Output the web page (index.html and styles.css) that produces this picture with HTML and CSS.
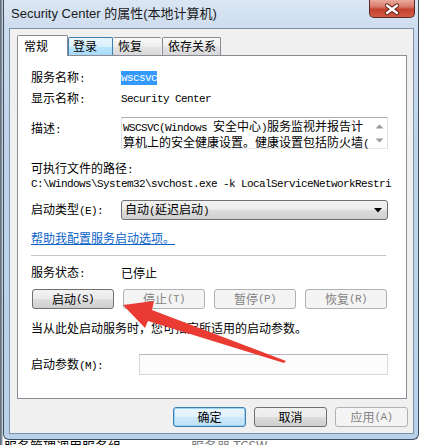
FILE: index.html
```html
<!DOCTYPE html>
<html lang="zh-CN">
<head>
<meta charset="utf-8">
<title>Security Center 的属性(本地计算机)</title>
<link rel="stylesheet" href="styles.css">
</head>
<body>
<div class="desk">
  <div class="window">
    <div class="titlebar">
      <span class="title">Security Center 的属性(本地计算机)</span>
      <div class="close">
        <svg width="44" height="16" viewBox="0 0 44 16">
          <path d="M17 4.5 L27 12 M27 4.5 L17 12" stroke="#5a1a12" stroke-width="4.2" stroke-linecap="round" fill="none"/>
          <path d="M17 4.5 L27 12 M27 4.5 L17 12" stroke="#ffffff" stroke-width="2.4" stroke-linecap="round" fill="none"/>
        </svg>
      </div>
    </div>
    <div class="client">
      <div class="tabs">
        <div class="tab active">常规</div>
        <div class="tab hover">登录</div>
        <div class="tab">恢复</div>
        <div class="tab t4">依存关系</div>
      </div>
      <div class="panel">
        <div class="row r1"><span class="lab">服务名称<span class="m">:</span></span><span class="m"><span class="hl">wscsvc</span></span></div>
        <div class="row r2"><span class="lab">显示名称<span class="m">:</span></span><span class="m">Security Center</span></div>
        <div class="row r3">
          <span class="lab top">描述<span class="m">:</span></span>
          <div class="desc">
            <div class="desc-text">
              <div class="line"><span class="m">WSCSVC(Windows </span>安全中心<span class="m">)</span>服务监视并报告计</div>
              <div class="line">算机上的安全健康设置。健康设置包括防火墙<span class="m">(</span></div>
            </div>
            <div class="vscroll">
              <svg width="9" height="5" viewBox="0 0 9 5"><path d="M0.5 4.5 L4.5 0.5 L8.5 4.5 Z" fill="#9a9a9a"/></svg>
              <svg width="9" height="5" viewBox="0 0 9 5"><path d="M0.5 0.5 L4.5 4.5 L8.5 0.5 Z" fill="#9a9a9a"/></svg>
            </div>
          </div>
        </div>
        <div class="plain r4">可执行文件的路径<span class="m">:</span></div>
        <div class="path">C:\Windows\System32\svchost.exe -k LocalServiceNetworkRestri</div>
        <div class="row r6">
          <span class="lab">启动类型<span class="m">(E):</span></span>
          <div class="combo">
            <span>自动<span class="m">(</span>延迟启动<span class="m">)</span></span>
            <svg width="8" height="5" viewBox="0 0 8 5"><path d="M0 0 L8 0 L4 4.5 Z" fill="#000"/></svg>
          </div>
        </div>
        <a class="link" href="#">帮助我配置服务启动选项。</a>
        <div class="sep"></div>
        <div class="row r8"><span class="lab">服务状态<span class="m">:</span></span><span>已停止</span></div>
        <div class="btnrow">
          <div class="btn">启动<span class="m">(S)</span></div>
          <div class="btn disabled">停止<span class="m">(T)</span></div>
          <div class="btn disabled">暂停<span class="m">(P)</span></div>
          <div class="btn disabled">恢复<span class="m">(R)</span></div>
        </div>
        <div class="plain r10">当从此处启动服务时，您可指定所适用的启动参数。</div>
        <div class="row r11">
          <span class="lab wide">启动参数<span class="m">(M):</span></span>
          <div class="input"></div>
        </div>
      </div>
      <div class="footer">
        <div class="btn big default">确定</div>
        <div class="btn big">取消</div>
        <div class="btn big disabled">应用<span class="m">(A)</span></div>
      </div>
    </div>
  </div>
  <div class="under"><span class="u1">服务管理调用服务组</span><span class="u2">服务器 TCSW</span></div>
  <svg class="arrow" width="425" height="445" viewBox="0 0 425 445">
    <polygon points="123,305 154,301 152,310 286,361 284,363 148,321 145,328" fill="#ea3b33"/>
  </svg>
</div>
</body>
</html>
```
FILE: styles.css
```css
* { box-sizing: border-box; }

body {
  margin: 0;
  font-family: "Noto Sans CJK SC", "Liberation Sans", sans-serif;
  font-size: 12px;
  color: #000;
}

.desk {
  position: relative;
  width: 425px;
  height: 445px;
  overflow: hidden;
  background: linear-gradient(90deg, #5a6572 0, #8e9aa8 2px, #ffffff 3px);
}

.window {
  margin-left: 3px;
  width: 416px;
  height: 440px;
  border: 1px solid #3e4f63;
  border-top: 0;
  border-radius: 0 0 6px 6px;
  background: linear-gradient(180deg, #dae6f3 0, #cddcee 28px, #c0d5ec 120px, #b9d0ea 100%);
  padding: 0 4px 5px 5px;
  display: flex;
  flex-direction: column;
}

.titlebar {
  height: 28px;
  display: flex;
  align-items: flex-start;
  flex: none;
}

.title {
  padding: 6px 0 0 2px;
  font-family: "Liberation Sans", "Noto Sans CJK SC", sans-serif;
  font-size: 13px;
  line-height: 16px;
  color: #1a1a1a;
}

.close {
  margin-left: auto;
  margin-right: -1px;
  width: 46px;
  height: 18px;
  border: 1px solid #5b2a24;
  border-top: 0;
  border-radius: 0 0 5px 5px;
  background: linear-gradient(180deg, #e9a99c 0, #d97a69 40%, #c4412f 55%, #d35a45 100%);
  display: flex;
  align-items: center;
  justify-content: center;
}

.client {
  width: 405px;
  height: 406px;
  border: 1px solid #7d90a6;
  background: #f0f0f0;
  padding: 6px 0 0 7px;
  display: flex;
  flex-direction: column;
}

.tabs {
  display: flex;
  align-items: flex-end;
  height: 20px;
  flex: none;
}

.tab {
  height: 18px;
  width: 45px;
  border: 1px solid #898c95;
  border-bottom: 0;
  border-right: 0;
  border-radius: 2px 2px 0 0;
  background: linear-gradient(180deg, #fafafa 0, #ededed 50%, #e3e3e3 51%, #d9d9d9 100%);
  padding-left: 4px;
  line-height: 16px;
  font-size: 12px;
}

.tab:last-child { border-right: 1px solid #898c95; }

.tab.active {
  width: 51px;
  height: 21px;
  margin-bottom: -1px;
  background: #fff;
  border-right: 1px solid #898c95;
  padding-left: 6px;
  line-height: 19px;
  position: relative;
  z-index: 1;
}

.tab.hover {
  border-color: #3c7fb1;
  border-right: 1px solid #3c7fb1;
  background: linear-gradient(180deg, #eaf6fd 0, #d9f0fc 50%, #bee6fd 51%, #a7d9f5 100%);
  padding-left: 4px;
}

.tab:nth-child(3) { width: 48px; border-left: 0; padding-left: 5px; }
.tab.t4 { width: 59px; margin-left: 1px; padding-left: 5px; }

.panel {
  width: 390px;
  height: 344px;
  border: 1px solid #898c95;
  background: #fff;
  padding: 0 0 0 13px;
  flex: none;
}

.m {
  font-family: "Liberation Mono", monospace;
  font-size: 11px;
  letter-spacing: -0.6px;
}

.row {
  display: flex;
  align-items: center;
  line-height: 14px;
}

.lab {
  width: 90px;
  flex: none;
}

.lab.wide { width: 108px; }
.lab.top { align-self: flex-start; padding-top: 4px; }

.hl {
  background: #3399ff;
  color: #fff;
  padding: 1px 0;
}

.r1 { margin-top: 15px; height: 14px; }
.r2 { margin-top: 7px; height: 14px; }
.r3 { margin-top: 11px; }

.desc {
  width: 267px;
  height: 32px;
  border: 1px solid #dbdfe6;
  border-top-color: #abadb3;
  border-bottom-color: #e3e9ef;
  display: flex;
}

.desc-text {
  flex: 1;
  padding: 1px 0 0 1px;
}

.line {
  white-space: nowrap;
  line-height: 13px;
}

.vscroll {
  width: 16px;
  flex: none;
  display: flex;
  flex-direction: column;
  justify-content: space-between;
  align-items: center;
  padding: 6px 0 5px;
}

.plain { line-height: 14px; white-space: nowrap; }
.r4 { margin-top: 12px; }

.path {
  font-family: "Liberation Mono", monospace;
  font-size: 11px;
  letter-spacing: -0.6px;
  line-height: 14px;
  white-space: nowrap;
}

.r6 { margin-top: 9px; }

.combo {
  width: 267px;
  height: 20px;
  border: 1px solid #707070;
  border-radius: 3px;
  background: linear-gradient(180deg, #f2f2f2 0, #ebebeb 50%, #dddddd 51%, #cfcfcf 100%);
  display: flex;
  align-items: center;
  padding: 0 5px 0 3px;
  line-height: 16px;
}

.combo svg { margin-left: auto; }

.link {
  display: inline-block;
  margin-top: 11px;
  color: #0a64c8;
  text-decoration: underline;
  line-height: 14px;
}

.sep {
  margin-top: 9px;
  width: 355px;
  height: 2px;
  border-top: 1px solid #c5c5c5;
  border-bottom: 1px solid #ffffff;
}

.r8 { margin-top: 9px; height: 14px; }

.btnrow {
  margin-top: 9px;
  margin-left: 1px;
  display: flex;
  gap: 9px;
}

.btn {
  width: 82px;
  height: 20px;
  border: 1px solid #707070;
  border-radius: 3px;
  background: linear-gradient(180deg, #f2f2f2 0, #ebebeb 50%, #dddddd 51%, #cfcfcf 100%);
  display: flex;
  align-items: center;
  justify-content: center;
  line-height: 16px;
}

.btn.disabled {
  border-color: #adb2b5;
  background: #f4f4f4;
  color: #838383;
}

.r10 { margin-top: 12px; }
.r11 { margin-top: 19px; }

.input {
  width: 249px;
  height: 21px;
  border: 1px solid #d5d9de;
  border-top-color: #b4b7bd;
  background: #fcfcfc;
}

.footer {
  margin-top: 8px;
  margin-right: 5px;
  display: flex;
  justify-content: flex-end;
  gap: 8px;
}

.btn.big { width: 73px; }

.btn.default {
  border-color: #3c7fb1;
  box-shadow: inset 0 0 0 1px #9bd3f5;
  background: linear-gradient(180deg, #eaf6fd 0, #e0f1fb 50%, #cde9f9 51%, #bfe1f6 100%);
}

.under {
  height: 5px;
  overflow: hidden;
  display: flex;
  font-size: 13px;
  line-height: 12px;
  padding-left: 4px;
}

.u2 { margin-left: 70px; color: #777; }

.arrow {
  position: absolute;
  left: 0;
  top: 0;
  pointer-events: none;
}
```
